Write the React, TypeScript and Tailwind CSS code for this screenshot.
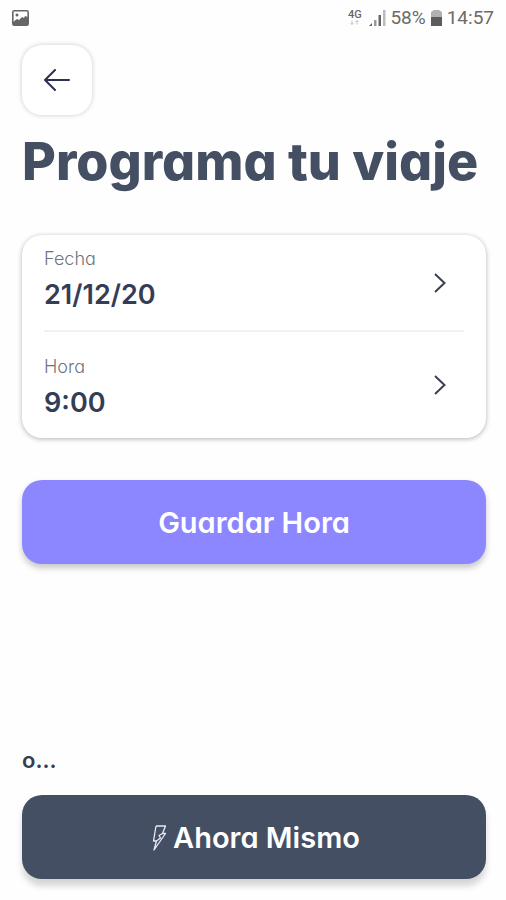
import { FC } from 'react';

interface IPickerRow {
  label: string;
  value: string;
  className: string;
}

const PickerRow: FC<IPickerRow> = ({ label, value, className }) => (
  <button
    type="button"
    className="flex w-full items-center justify-between text-left"
  >
    <span className={`flex flex-col gap-2.5 ${className}`}>
      <span className="text-lg leading-5 font-light text-[#70747c]">
        {label}
      </span>
      <span className="text-[27px] leading-8 font-semibold text-[#343d55]">
        {value}
      </span>
    </span>
    <svg
      className="mr-[18px] h-5 w-3 shrink-0"
      viewBox="0 0 12 20"
      fill="none"
      stroke="#3a4050"
      strokeWidth="2"
      aria-hidden="true"
    >
      <path d="M1 1l9.5 9L1 19" />
    </svg>
  </button>
);

const StatusBar: FC = () => (
  <header className="flex h-9 items-center justify-between px-3 font-[Roboto,sans-serif] text-[#6b6b6b]">
    <svg className="h-4 w-[17px]" viewBox="0 0 17 16" aria-hidden="true">
      <rect
        x="0.8"
        y="0.8"
        width="15.4"
        height="14.4"
        rx="1.5"
        fill="#fff"
        stroke="#666"
        strokeWidth="1.6"
      />
      <path d="M1 15v-3l4-3 2 1 3-3 2 1 1-2 3 1v8z" fill="#666" />
      <circle cx="5" cy="5" r="1.5" fill="#666" />
    </svg>
    <div className="flex items-center">
      <svg className="mr-1.5 h-[18px] w-4" viewBox="0 0 16 18" aria-hidden="true">
        <text x="1" y="9" fontSize="11" fontWeight="500" fill="#666">
          4G
        </text>
        <path
          d="M5 11.5v4M3.5 14L5 15.5L6.5 14M10 15.5v-4M8.5 13L10 11.5L11.5 13"
          fill="none"
          stroke="#c4c4c4"
        />
      </svg>
      <svg className="mr-1 h-[18px] w-[17px]" viewBox="0 0 17 18" aria-hidden="true">
        <path d="M0 17l3-3v3z" fill="#666" />
        <path d="M5 11h2.5v6H5z" fill="#999" />
        <path d="M9.5 6H12v11H9.5z" fill="#666" />
        <path d="M14 1h2.5v16H14z" fill="#bbb" />
      </svg>
      <span className="text-[19px] leading-6">58%</span>
      <svg className="mx-[5px] h-4 w-[11px]" viewBox="0 0 11 16" aria-hidden="true">
        <path d="M3 0h5l3 2v14H0V2z" fill="#b0b0b0" />
        <path d="M0 7h11v9H0z" fill="#5c5c5c" />
      </svg>
      <span className="text-[19px] leading-6">14:57</span>
    </div>
  </header>
);

const App: FC = () => {
  return (
    <div className="flex min-h-screen flex-col bg-[#fefefe] font-[Inter,sans-serif] [font-feature-settings:'cv11']">
      <StatusBar />
      <main className="flex grow flex-col pt-[9px] pr-5 pb-[21px] pl-[22px]">
        <button
          type="button"
          aria-label="Volver"
          className="flex size-[70px] items-center justify-center rounded-[20px] bg-white shadow-[0_0_5px_rgba(0,0,0,0.2)]"
        >
          <svg
            className="h-[22px] w-[26px]"
            viewBox="0 0 26 22"
            fill="none"
            stroke="#2b3050"
            strokeWidth="2"
            strokeLinecap="round"
            strokeLinejoin="round"
            aria-hidden="true"
          >
            <path d="M25 11H1M11 1L1 11l10 10" />
          </svg>
        </button>

        <h1 className="mt-[17px] text-[52px] leading-[60px] font-extrabold whitespace-nowrap text-[#454f63]">
          Programa tu viaje
        </h1>

        <section className="mt-[43px] rounded-[20px] bg-white px-[22px] shadow-[0_1px_5px_rgba(0,0,0,0.3)]">
          <PickerRow label="Fecha" value="21/12/20" className="pt-3.5 pb-[19px]" />
          <hr className="border-t-2 border-[#f1f1f1]" />
          <PickerRow label="Hora" value="9:00" className="pt-[25px] pb-[19px]" />
        </section>

        <button
          type="button"
          className="mt-[42px] h-[84px] shrink-0 rounded-[20px] bg-[#8c87ff] pt-0.5 text-[29px] leading-9 font-semibold text-white shadow-[0_4px_6px_rgba(0,0,0,0.22)]"
        >
          Guardar Hora
        </button>

        <p className="mt-auto text-[22px] leading-8 font-semibold text-[#343d55]">
          o...
        </p>

        <button
          type="button"
          className="mt-[19px] flex h-[84px] shrink-0 items-center justify-center gap-1.5 rounded-[20px] bg-[#454f63] pt-0.5 pl-1 text-[29px] leading-9 font-semibold text-white shadow-[0_7px_6px_rgba(0,0,0,0.16)]"
        >
          <svg
            className="h-[26px] w-[15px]"
            viewBox="0 0 15 26"
            fill="none"
            stroke="#e6ebf7"
            strokeWidth="1.3"
            strokeLinejoin="round"
            aria-hidden="true"
          >
            <path d="M4 1H13.5L10.5 8.5H13.5L2 25L4.5 16H1.5L4 1M10.5 8.5L7 10.5L8.5 13L4.5 16" />
          </svg>
          Ahora Mismo
        </button>
      </main>
    </div>
  );
};

export default App;
